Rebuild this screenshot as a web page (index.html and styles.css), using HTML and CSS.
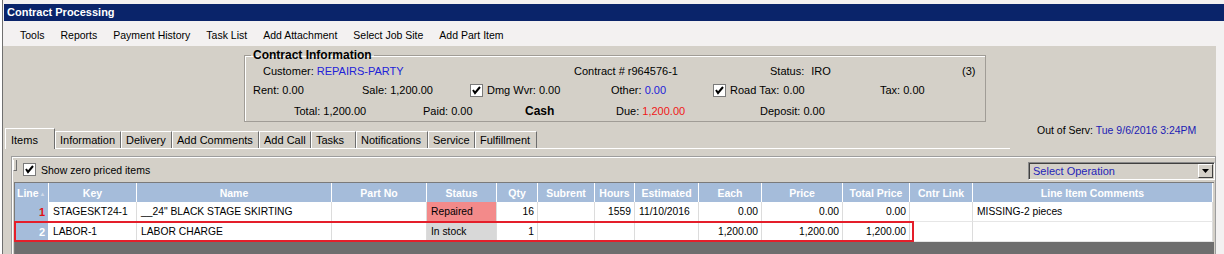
FILE: index.html
```html
<!DOCTYPE html>
<html lang="en">
<head>
    <meta charset="UTF-8">
    <title>Contract Processing</title>
    <link rel="stylesheet" href="styles.css">
</head>
<body>
<div class="window">
    <div class="titlebar">Contract Processing</div>

    <!-- MENU -->
    <div class="menubar">
        <span>Tools</span>
        <span>Reports</span>
        <span>Payment History</span>
        <span>Task List</span>
        <span>Add Attachment</span>
        <span>Select Job Site</span>
        <span>Add Part Item</span>
    </div>

    <div class="client">
        <!-- CONTRACT INFO -->
        <fieldset class="contract">
            <legend>Contract Information</legend>
            <div class="row row1">
                <span>Customer: <span class="blue">REPAIRS-PARTY</span></span>
                <span>Contract # r964576-1</span>
                <span>Status: <span class="val">IRO</span></span>
                <span>(3)</span>
            </div>
            <div class="row row2">
                <span>Rent: 0.00</span>
                <span>Sale: 1,200.00</span>
                <span class="with-cb"><span class="cb"><svg width="11" height="11" viewBox="0 0 11 11"><polyline points="2,5 4,8 9,2" fill="none" stroke="#000" stroke-width="2"/></svg></span>Dmg Wvr: 0.00</span>
                <span>Other: <span class="blue">0.00</span></span>
                <span class="with-cb"><span class="cb"><svg width="11" height="11" viewBox="0 0 11 11"><polyline points="2,5 4,8 9,2" fill="none" stroke="#000" stroke-width="2"/></svg></span>Road Tax: <span class="val">0.00</span></span>
                <span>Tax: 0.00</span>
            </div>
            <div class="row row3">
                <span>Total: 1,200.00</span>
                <span>Paid: 0.00</span>
                <span class="cash">Cash</span>
                <span>Due: <span class="red">1,200.00</span></span>
                <span>Deposit: 0.00</span>
            </div>
        </fieldset>

        <!-- TABS -->
        <div class="tabbar">
            <div class="tabs">
                <span class="tab active t-items">Items</span>
                <span class="tab t-info">Information</span>
                <span class="tab t-deliv">Delivery</span>
                <span class="tab t-comm">Add Comments</span>
                <span class="tab t-call">Add Call</span>
                <span class="tab t-tasks">Tasks</span>
                <span class="tab t-notif">Notifications</span>
                <span class="tab t-serv">Service</span>
                <span class="tab t-fulf">Fulfillment</span>
            </div>
            <div class="outserv">Out of Serv: <span class="date">Tue 9/6/2016 3:24PM</span></div>
        </div>

        <!-- ITEMS PAGE -->
        <div class="page">
            <div class="toolbar">
                <span class="grip"></span>
                <span class="cb"><svg width="11" height="11" viewBox="0 0 11 11"><polyline points="2,5 4,8 9,2" fill="none" stroke="#000" stroke-width="2"/></svg></span>
                <span class="showzero">Show zero priced items</span>
                <div class="select">
                    <span>Select Operation</span>
                    <span class="drop"><svg width="7" height="4" viewBox="0 0 7 4"><polygon points="0,0 7,0 3.5,4" fill="#000"/></svg></span>
                </div>
            </div>

            <div class="grid">
                <table>
                    <colgroup>
                        <col class="c-line"><col class="c-key"><col class="c-name"><col class="c-part">
                        <col class="c-status"><col class="c-qty"><col class="c-subrent"><col class="c-hours">
                        <col class="c-est"><col class="c-each"><col class="c-price"><col class="c-total">
                        <col class="c-link"><col class="c-comm">
                    </colgroup>
                    <thead>
                        <tr>
                            <th class="line-head">Line<span class="sort">&#9650;</span></th>
                            <th>Key</th>
                            <th>Name</th>
                            <th>Part No</th>
                            <th>Status</th>
                            <th>Qty</th>
                            <th>Subrent</th>
                            <th>Hours</th>
                            <th>Estimated</th>
                            <th>Each</th>
                            <th>Price</th>
                            <th>Total Price</th>
                            <th>Cntr Link</th>
                            <th>Line Item Comments</th>
                        </tr>
                    </thead>
                    <tbody>
                        <tr>
                            <td class="num line-red">1</td>
                            <td>STAGESKT24-1</td>
                            <td>__24" BLACK STAGE SKIRTING</td>
                            <td></td>
                            <td class="repaired">Repaired</td>
                            <td class="r">16</td>
                            <td></td>
                            <td class="r">1559</td>
                            <td>11/10/2016</td>
                            <td class="r">0.00</td>
                            <td class="r">0.00</td>
                            <td class="r">0.00</td>
                            <td></td>
                            <td>MISSING-2 pieces</td>
                        </tr>
                        <tr>
                            <td class="num">2</td>
                            <td>LABOR-1</td>
                            <td>LABOR CHARGE</td>
                            <td></td>
                            <td class="instock">In stock</td>
                            <td class="r">1</td>
                            <td></td>
                            <td></td>
                            <td></td>
                            <td class="r">1,200.00</td>
                            <td class="r">1,200.00</td>
                            <td class="r">1,200.00</td>
                            <td></td>
                            <td></td>
                        </tr>
                    </tbody>
                </table>
                <div class="grid-empty"></div>
                <div class="mark"></div>
            </div>
        </div>
    </div>
</div>
</body>
</html>
```

FILE: styles.css
```css
body {
    margin: 0;
    background: #ffffff;
    font-family: "Liberation Sans", Arial, sans-serif;
    font-size: 11px;
    color: #000;
}
.window {
    margin-left: 2px;
    border-left: 1px solid #6f6f6f;
    height: 254px;
    box-sizing: border-box;
    padding-top: 4px;
    background: #f3f1f1;
    overflow: hidden;
}
.titlebar {
    margin-left: 1px;
    height: 17px;
    line-height: 17px;
    padding-left: 3px;
    background: #0a246a;
    color: #fff;
    font-weight: bold;
}
.menubar {
    height: 25px;
    box-sizing: border-box;
    padding: 3px 0 0 17px;
    display: flex;
    align-items: center;
    gap: 16px;
    font-size: 10.5px;
}
.client {
    background: #d4d0c8;
    margin-right: 8px;
    height: 208px;
    padding-top: 2px;
    box-sizing: border-box;
}
.blue {
    color: #2222d8;
}
.red {
    color: #f01818;
}

/* contract information box */
.contract {
    margin: 0 0 0 241px;
    padding: 0;
    width: 742px;
    box-sizing: border-box;
    border: 1px solid #a09c96;
    box-shadow: inset 1px 1px #ffffff;
    min-inline-size: 0;
}
.contract legend {
    margin-left: 6px;
    padding: 0 2px;
    font-size: 12px;
    font-weight: bold;
    line-height: 14px;
}
.row {
    display: grid;
    align-items: center;
    white-space: nowrap;
}
.row1 {
    height: 18px;
    padding-left: 18px;
    grid-template-columns: 311px 196px 192px auto;
}
.row2 {
    height: 20px;
    padding-left: 8px;
    grid-template-columns: 109px 108px 141px 102px 167px auto;
}
.row3 {
    height: 21px;
    padding-left: 49px;
    grid-template-columns: 129px 102px 91px 144px auto;
}
.val {
    margin-left: 4px;
}
.cash {
    font-weight: bold;
    font-size: 12px;
}
.with-cb {
    display: flex;
    align-items: center;
}
.cb {
    display: inline-flex;
    width: 11px;
    height: 11px;
    border: 1px solid #7a7a7a;
    background: #fff;
    margin-right: 4px;
}

/* tabs */
.tabbar {
    display: flex;
    margin-top: 6px;
    padding-left: 2px;
}
.tabs {
    width: 1005px;
    height: 20px;
    display: flex;
    align-items: flex-end;
    border-bottom: 1px solid #ffffff;
}
.tab {
    height: 16px;
    line-height: 16px;
    box-sizing: content-box;
    padding-left: 4px;
    border-top: 1px solid #ffffff;
    border-left: 1px solid #ffffff;
    border-right: 1px solid #6e6e6e;
    white-space: nowrap;
    overflow: hidden;
}
.tab.active {
    height: 20px;
    line-height: 22px;
    margin-bottom: -1px;
    background: #d4d0c8;
    padding-left: 5px;
}
.t-items { width: 43px; }
.t-info { width: 60px; }
.t-deliv { width: 45px; }
.t-comm { width: 81px; }
.t-call { width: 46px; }
.t-tasks { width: 39px; }
.t-notif { width: 66px; }
.t-serv { width: 41px; }
.t-fulf { width: 56px; }
.outserv {
    margin: -5px 0 0 27px;
    line-height: 14px;
    font-size: 10.5px;
    white-space: nowrap;
}
.date {
    color: #1c1cb4;
}

/* items page */
.page {
    margin: 7px 0 0 8px;
    height: 120px;
    border: 1px solid #9d9d9d;
    box-shadow: inset 1px 1px #ffffff;
}
.toolbar {
    height: 25px;
    display: flex;
    align-items: center;
    padding-left: 1px;
}
.grip {
    align-self: flex-start;
    margin-top: 3px;
    width: 2px;
    height: 10px;
    border-left: 1px solid #ffffff;
    border-right: 1px solid #707070;
    border-bottom: 1px solid #707070;
    margin-right: 6px;
}
.toolbar .cb {
    margin-right: 5px;
}
.showzero {
    font-size: 10.5px;
}
.select {
    margin-left: auto;
    margin-top: 3px;
    width: 187px;
    height: 18px;
    box-sizing: border-box;
    border: 1px solid #8a8a8a;
    border-right-color: #ffffff;
    border-bottom-color: #ffffff;
    box-shadow: inset 1px 1px #404040;
    display: flex;
    align-items: center;
    padding-left: 4px;
    color: #2424b8;
}
.drop {
    margin-left: auto;
    margin-right: 1px;
    width: 15px;
    height: 14px;
    box-sizing: border-box;
    display: flex;
    align-items: center;
    justify-content: center;
    background: #d4d0c8;
    border: 1px solid #ffffff;
    border-right-color: #404040;
    border-bottom-color: #404040;
}

/* item grid */
.grid {
    position: relative;
    margin-left: 2px;
    width: 1199px;
    border-top: 1px solid #7a7a7a;
    border-left: 1px solid #7a7a7a;
}
.grid table {
    width: 1198px;
    table-layout: fixed;
    border-collapse: separate;
    border-spacing: 0;
    background: #ffffff;
}
.c-line { width: 34px; }
.c-key { width: 88px; }
.c-name { width: 195px; }
.c-part { width: 95px; }
.c-status { width: 70px; }
.c-qty { width: 41px; }
.c-subrent { width: 57px; }
.c-hours { width: 40px; }
.c-est { width: 64px; }
.c-each { width: 63px; }
.c-price { width: 81px; }
.c-total { width: 67px; }
.c-link { width: 63px; }
.c-comm { width: 240px; }
.grid th {
    height: 19px;
    padding: 0;
    background: #a5bcda;
    color: #ffffff;
    font-size: 10.5px;
    font-weight: bold;
    border-right: 1px solid #ffffff;
    white-space: nowrap;
    overflow: hidden;
}
.grid th.line-head {
    text-align: left;
    padding-left: 2px;
}
.sort {
    font-size: 6px;
    color: #d0dae8;
    margin-left: 1px;
    vertical-align: 1px;
}
.grid td {
    height: 19px;
    padding: 0 4px;
    font-size: 10.3px;
    border-right: 1px solid #dcdcdc;
    border-bottom: 1px solid #e6e6e6;
    white-space: nowrap;
    overflow: hidden;
}
.grid td.r {
    text-align: right;
    padding-right: 3px;
}
.grid td.num {
    background: #a5bcda;
    color: #ffffff;
    font-size: 11px;
    font-weight: bold;
    text-align: right;
    padding-right: 3px;
    border-right-color: #ffffff;
    border-bottom-color: #ffffff;
}
.grid td.line-red {
    color: #e01010;
}
.grid td.repaired {
    background: #f38a8a;
}
.grid td.instock {
    background: #d8d8d8;
}
.grid-empty {
    height: 20px;
    background: #6e6e6e;
}
.mark {
    position: absolute;
    left: -1px;
    top: 38px;
    width: 900px;
    height: 21px;
    box-sizing: border-box;
    border: 2px solid #e41e2a;
}
```
